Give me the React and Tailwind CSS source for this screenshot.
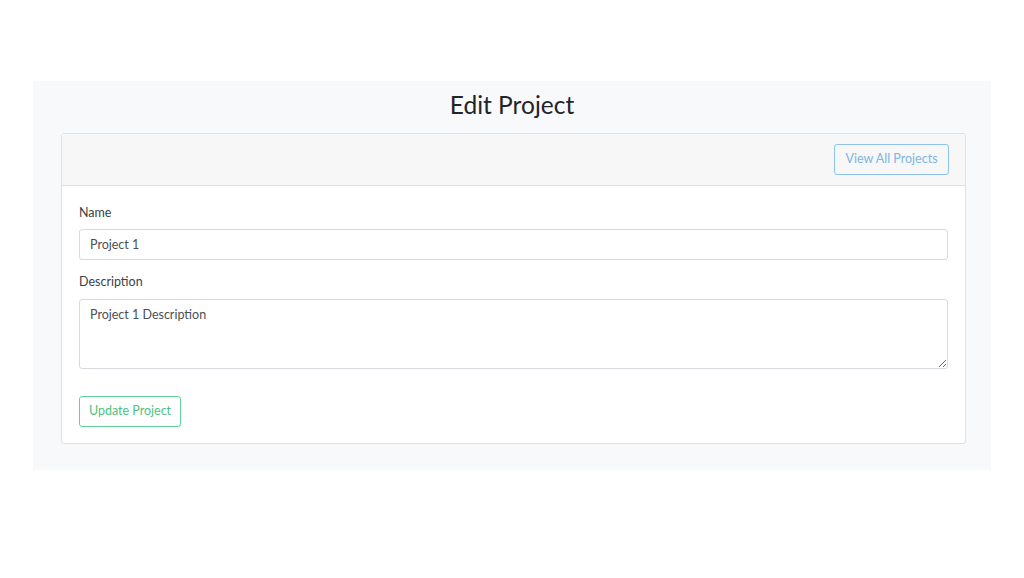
export default function App() {
  return (
    <div className="min-h-[578px] bg-white pt-[81px] font-['Lato','Noto_Sans',sans-serif] text-[12.5px] text-[#212529]">
      <div className="mx-[33px] h-[389px] bg-[#f8f9fa] pt-[10px]">
        <h1 className="h-[28px] text-center text-[24.5px] leading-[28px] text-[#212529]">Edit Project</h1>
        <div className="ml-[28px] mr-[25px] mt-[14px] rounded-[3px] border border-[#dfe1e4] bg-white">
          <div className="flex h-[52px] items-start justify-end border-b border-[#dfe1e4] bg-[#f7f7f7] pr-[16px] pt-[10px]">
            <button className="h-[31px] w-[115px] rounded-[3px] border border-[#8fc3ee] text-[#7db5e6]">
              View All Projects
            </button>
          </div>
          <div className="px-[17px] pt-[18px] pb-[16px]">
            <label className="block h-[18px] leading-[18px] text-[#3d4247]">Name</label>
            <input
              className="mt-[7px] block h-[31px] w-full rounded-[3px] border border-[#d6d9dd] px-[10px] text-[#495057] outline-none"
              defaultValue="Project 1"
            />
            <label className="mt-[13px] block h-[18px] leading-[18px] text-[#3d4247]">Description</label>
            <textarea
              className="mt-[8px] block h-[70px] w-full rounded-[3px] border border-[#d6d9dd] px-[10px] pt-[6px] leading-[18px] text-[#495057] outline-none"
              defaultValue="Project 1 Description"
            />
            <button className="mt-[27px] h-[31px] w-[102px] rounded-[3px] border border-[#5fd39a] text-[#4fc282]">
              Update Project
            </button>
          </div>
        </div>
      </div>
    </div>
  );
}
